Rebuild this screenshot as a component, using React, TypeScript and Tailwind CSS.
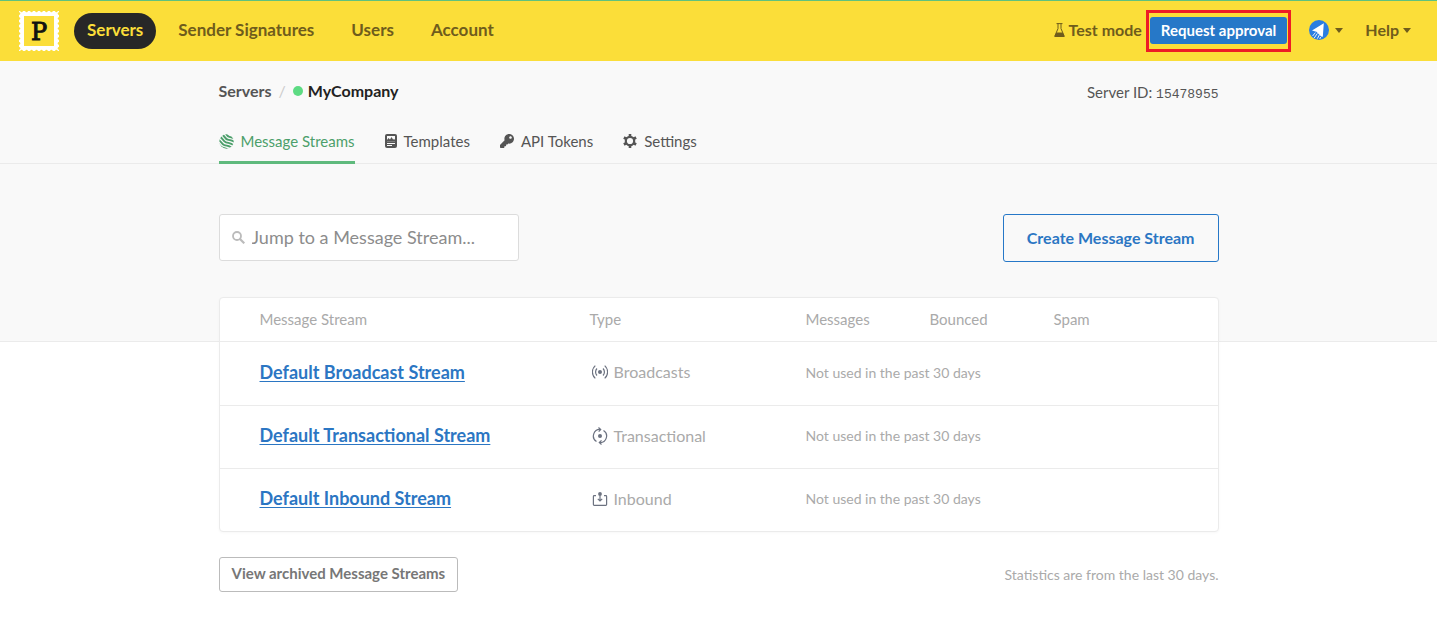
import type { ReactNode } from "react";
import { FaKey } from "react-icons/fa";

const Logo = () => {
    const dots = [0, 1, 2, 3, 4, 5, 6, 7];
    return (
        <svg width="40" height="40" viewBox="0 0 40 40" aria-label="Postmark">
            <rect x="0" y="0" width="40" height="40" fill="#fff" />
            {/* Perforated edge */}
            {dots.map((i) => (
                <g key={i} fill="#fbde39">
                    <circle cx={2.6 + i * 4.97} cy="0" r="1.3" />
                    <circle cx={2.6 + i * 4.97} cy="40" r="1.3" />
                    <circle cx="0" cy={2.6 + i * 4.97} r="1.3" />
                    <circle cx="40" cy={2.6 + i * 4.97} r="1.3" />
                </g>
            ))}
            <rect x="5" y="5" width="30" height="30" fill="#fbde39" />
            <text x="20" y="29" textAnchor="middle" fontSize="24" fontWeight="400" fontFamily="'DejaVu Serif', serif" fill="#111" stroke="#111" strokeWidth="1">P</text>
        </svg>
    );
};

const Caret = () => (
    <svg width="8" height="5" viewBox="0 0 8 5" fill="currentColor" aria-hidden="true">
        <path d="M0 0h8L4 5z" />
    </svg>
);

const FlaskIcon = () => (
    <svg width="11" height="14" viewBox="0 0 11 14" aria-hidden="true">
        <path d="M2.5 0.6h6M4 0.6v5L1 12.6M7 0.6v5L10 12.6" fill="none" stroke="currentColor" strokeWidth="1" />
        <path d="M2.5 9.5h6L10.6 13a.7.7 0 0 1-.6 1H1a.7.7 0 0 1-.6-1z" fill="currentColor" />
    </svg>
);

const Avatar = () => (
    <svg width="20" height="20" viewBox="0 0 20 20" aria-hidden="true">
        <circle cx="10" cy="10" r="10" fill="#2a7de1" />
        <path d="M14.8 3.2L3 10.6l4.4 1.2 4.8 4.8 1.6.2z" fill="#fff" />
        <path d="M6.4 12.6L3.6 16M8.4 13.4L5.2 18M10.4 14.8L8.4 18.6M11.6 17l-.8 2" stroke="#fff" strokeWidth="0.9" fill="none" />
    </svg>
);

const StreamsIcon = () => (
    <svg width="15" height="15" viewBox="0 0 15 15" aria-hidden="true">
        <clipPath id="streams-clip">
            <circle cx="7.5" cy="7.5" r="7.2" />
        </clipPath>
        <g clipPath="url(#streams-clip)" fill="none" stroke="currentColor" strokeWidth="1.9">
            <g transform="rotate(32 7.5 7.5)">
                <path d="M-2 1.100C2-.9 4 3.100 7.500 2.100S13-.9 17 1.100" />
                <path d="M-2 4.300C2 2.300 4 6.300 7.500 5.300S13 2.300 17 4.300" />
                <path d="M-2 7.500C2 5.500 4 9.500 7.500 8.500S13 5.500 17 7.500" />
                <path d="M-2 10.700C2 8.700 4 12.700 7.500 11.700S13 8.700 17 10.700" />
                <path d="M-2 13.900C2 11.900 4 15.900 7.500 14.900S13 11.900 17 13.900" />
            </g>
        </g>
    </svg>
);

const TemplatesIcon = () => (
    <svg width="12" height="14" viewBox="0 0 12 14" aria-hidden="true">
        <path d="M2 0h8a2 2 0 0 1 2 2v10a2 2 0 0 1-2 2H2a2 2 0 0 1-2-2V2a2 2 0 0 1 2-2z" fill="currentColor" />
        <path d="M2 2h8v5.500H2z" fill="#f9f9f9" />
        <path d="M2 7.500V6l1.500-2L5 5.500 6.500 3l1.700 2.700L9 4.800l1 1.200v1.500z" fill="currentColor" />
        <path d="M2 9.500h8M2 11.500h5" stroke="#f9f9f9" strokeWidth="1" />
    </svg>
);

const GearIcon = () => (
    <svg width="14" height="14" viewBox="0 0 14 14" aria-hidden="true">
        <g stroke="currentColor" strokeWidth="2.600">
            <path d="M7 0v3M7 11v3M.9 3.500l2.600 1.500M10.500 9l2.600 1.500M.9 10.500l2.600-1.500M10.500 5l2.600-1.500" />
        </g>
        <circle cx="7" cy="7" r="4.200" fill="none" stroke="currentColor" strokeWidth="2.200" />
    </svg>
);

const SearchIcon = () => (
    <svg width="13" height="13" viewBox="0 0 13 13" fill="none" stroke="currentColor" aria-hidden="true">
        <circle cx="5" cy="5" r="4" strokeWidth="1.800" />
        <path d="M8 8l4.300 4.300" strokeWidth="2.200" />
    </svg>
);

const BroadcastIcon = () => (
    <svg width="16" height="14" viewBox="0 0 16 14" fill="none" stroke="currentColor" strokeWidth="1.200" aria-hidden="true">
        <circle cx="8" cy="7" r="2" fill="currentColor" stroke="none" />
        <path d="M5 3.500a5 5 0 0 0 0 7M11 3.500a5 5 0 0 1 0 7M3.300.6a8.500 8.500 0 0 0 0 12.800M12.700.6a8.500 8.500 0 0 1 0 12.800" />
    </svg>
);

const TransactionalIcon = () => (
    <svg width="16" height="18" viewBox="0 0 16 18" fill="none" stroke="currentColor" strokeWidth="1.200" aria-hidden="true">
        <circle cx="8" cy="9" r="2" fill="currentColor" stroke="none" />
        <path d="M4.500 14.500A6.500 6.500 0 0 1 8.500 2.500M11.500 3.500A6.500 6.500 0 0 1 7.500 15.500" />
        <path d="M6.500.5l2.200 2-2 2.200M9.500 13.300l-2.200 2.200 2.200 2" />
    </svg>
);

const InboundIcon = () => (
    <svg width="16" height="14" viewBox="0 0 16 14" fill="none" stroke="currentColor" strokeWidth="1.200" aria-hidden="true">
        <path d="M4 3.600H2.200a.8.8 0 0 0-.8.800v8.200c0 .4.400.8.800.8h11.600c.4 0 .8-.4.800-.8V4.400a.8.800 0 0 0-.8-.8H12" />
        <circle cx="8" cy="1.900" r="1.900" fill="currentColor" stroke="none" />
        <path d="M8 2v6.500M5.800 6.800L8 9l2.200-2.200" />
    </svg>
);

const tabs: { label: string; icon: ReactNode }[] = [
    { label: "Templates", icon: <TemplatesIcon /> },
    { label: "API Tokens", icon: <FaKey size={14} /> },
    { label: "Settings", icon: <GearIcon /> },
];

const streams: { name: string; type: string; icon: ReactNode }[] = [
    { name: "Default Broadcast Stream", type: "Broadcasts", icon: <BroadcastIcon /> },
    { name: "Default Transactional Stream", type: "Transactional", icon: <TransactionalIcon /> },
    { name: "Default Inbound Stream", type: "Inbound", icon: <InboundIcon /> },
];

const Header = () => (
    <header className="flex h-[61px] items-center justify-between border-t border-[#5fc27e] bg-[#fbde39] pl-[19px] pr-[26px] font-bold text-[#6f5c1c]">
        <div className="flex items-center">
            <a href="#"><Logo /></a>
            <nav className="ml-[15px] flex items-center text-[17px]">
                <a href="#" className="mr-[22px] flex h-9 items-center rounded-full bg-[#272727] px-[13px] pb-0.5 text-[#fbde39]">Servers</a>
                <div className="flex gap-[37px] pb-0.5">
                    <a href="#">Sender Signatures</a>
                    <a href="#">Users</a>
                    <a href="#">Account</a>
                </div>
            </nav>
        </div>
        <div className="flex items-center text-[16px]">
            <span className="flex items-center gap-1 pb-0.5"><FlaskIcon />Test mode</span>
            <div className="ml-1 border-3 border-[#ee1c25] px-px pt-1 pb-[5px]">
                <button className="block h-[27px] rounded-[3px] bg-[#2678c8] px-[11px] text-[15px] text-white">Request approval</button>
            </div>
            <button className="ml-[18px] flex items-center gap-[6px] pb-0.5" aria-label="Profile"><Avatar /><Caret /></button>
            <button className="ml-[22px] flex items-center gap-1 pb-0.5">Help <Caret /></button>
        </div>
    </header>
);

const App = () => {
    return (
        <div className="min-h-screen bg-white font-['Lato',sans-serif] text-[#555]">
            <Header />

            {/* Breadcrumb and tabs */}
            <div className="border-b border-[#ebebeb] bg-[#f9f9f9] pt-5">
                <div className="mx-auto max-w-[1000px]">
                    <div className="flex h-6 justify-between leading-5">
                        <div className="flex items-center self-start text-[16px] font-bold">
                            <a href="#">Servers</a>
                            <span className="mx-[7px] font-normal text-[#ccc]">/</span>
                            <span className="mr-[5px] size-[10px] rounded-full bg-[#5ddb83]"></span>
                            <span className="text-[#222]">MyCompany</span>
                        </div>
                        <span className="self-end text-[15px]">Server ID: <span className="font-['Liberation_Mono',monospace] text-[13px]">15478955</span></span>
                    </div>
                    <nav className="-mb-px flex gap-[30px] pt-[26px] text-[15px] leading-5">
                        <a href="#" className="flex items-center gap-[7px] border-b-3 border-[#5fba7d] pb-[10px] text-[#4c9f6b]"><StreamsIcon />Message Streams</a>
                        {tabs.map((tab) => (
                            <a key={tab.label} href="#" className="flex items-center gap-[7px] pb-[13px]">{tab.icon}{tab.label}</a>
                        ))}
                    </nav>
                </div>
            </div>

            {/* Search and create */}
            <div className="border-b border-[#ebebeb] bg-[#f9f9f9] pt-[50px] pb-[79px]">
                <div className="mx-auto flex max-w-[1000px] items-start justify-between">
                    <label className="flex h-[47px] w-[300px] items-center gap-[7px] rounded-[3px] border border-[#dcdcdc] bg-white px-3 text-[#bbb]">
                        <SearchIcon />
                        <input type="text" aria-label="Jump to a Message Stream" placeholder="Jump to a Message Stream..." className="min-w-0 flex-1 text-[18px] text-[#555] outline-none placeholder:text-[#8c8c8c]" />
                    </label>
                    <button className="h-12 rounded-[3px] border border-[#2678c8] px-[23px] text-[16px] font-bold text-[#2b76c3]">Create Message Stream</button>
                </div>
            </div>

            <main className="relative mx-auto -mt-[45px] max-w-[1000px]">
                <div className="rounded-[4px] border border-[#ebebeb] bg-white shadow-[0_1px_3px_rgba(0,0,0,0.03)]">
                    <table className="w-full table-fixed text-left text-[#aaa]">
                        <thead>
                            <tr className="h-[43px] text-[15px]">
                                <th className="w-[370px] pl-10 font-normal">Message Stream</th>
                                <th className="w-[216px] font-normal">Type</th>
                                <th className="w-[124px] font-normal">Messages</th>
                                <th className="w-[124px] font-normal">Bounced</th>
                                <th className="font-normal">Spam</th>
                            </tr>
                        </thead>
                        <tbody>
                            {streams.map((stream) => (
                                <tr key={stream.name} className="h-[63px] border-t border-[#ebebeb] first:h-16">
                                    <td className="pl-10 pb-0.5 text-[18px] font-bold">
                                        <a href="#" className="text-[#2b76c3] underline decoration-1 underline-offset-2">{stream.name}</a>
                                    </td>
                                    <td className="pb-0.5 text-[16px]">
                                        <span className="flex items-center gap-[6px] pl-[2px]">
                                            <span className="text-[#6c7280]">{stream.icon}</span>
                                            {stream.type}
                                        </span>
                                    </td>
                                    <td colSpan={3} className="pb-0.5 text-[14px]">Not used in the past 30 days</td>
                                </tr>
                            ))}
                        </tbody>
                    </table>
                </div>

                <div className="mt-[25px] flex items-center justify-between">
                    <button className="h-[35px] rounded-[3px] border border-[#bbb] px-3 pb-0.5 text-[15px] font-bold text-[#777]">View archived Message Streams</button>
                    <p className="text-[14px] text-[#aaa]">Statistics are from the last 30 days.</p>
                </div>
            </main>
        </div>
    );
};

export default App;
